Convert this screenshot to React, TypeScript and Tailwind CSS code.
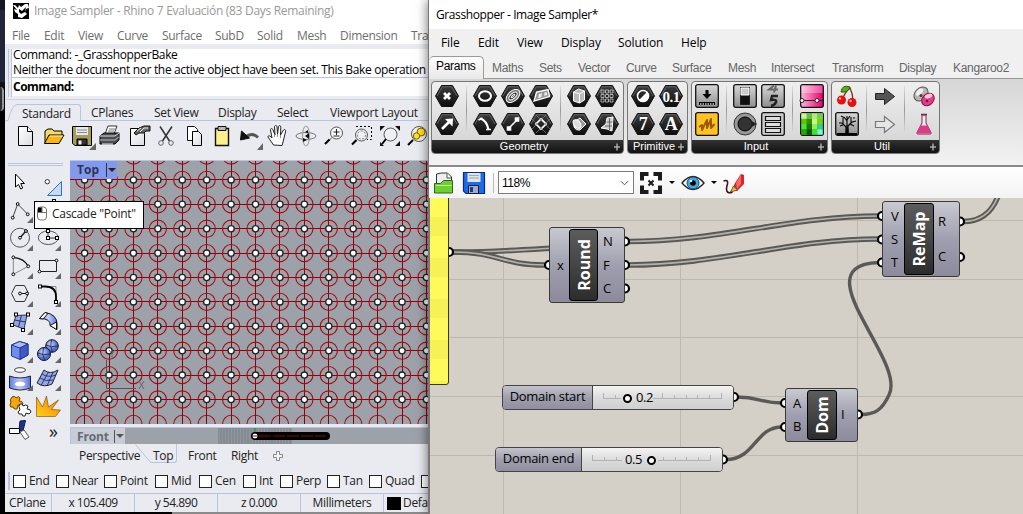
import React from "react";

type Item = { t: string; c: string };

const rhinoMenu: Item[] = [
  { t: "File", c: "w-[32px]" },
  { t: "Edit", c: "w-[34px]" },
  { t: "View", c: "w-[39px]" },
  { t: "Curve", c: "w-[45px]" },
  { t: "Surface", c: "w-[53px]" },
  { t: "SubD", c: "w-[42px]" },
  { t: "Solid", c: "w-[40px]" },
  { t: "Mesh", c: "w-[43px]" },
  { t: "Dimension", c: "w-[71px]" },
  { t: "Transform", c: "w-[60px]" },
];

const ghMenu: Item[] = [
  { t: "File", c: "w-[37px]" },
  { t: "Edit", c: "w-[39px]" },
  { t: "View", c: "w-[44px]" },
  { t: "Display", c: "w-[57px]" },
  { t: "Solution", c: "w-[63px]" },
  { t: "Help", c: "w-[40px]" },
];

const ghTabs: Item[] = [
  { t: "Maths", c: "w-[47px]" },
  { t: "Sets", c: "w-[39px]" },
  { t: "Vector", c: "w-[48px]" },
  { t: "Curve", c: "w-[46px]" },
  { t: "Surface", c: "w-[56px]" },
  { t: "Mesh", c: "w-[43px]" },
  { t: "Intersect", c: "w-[61px]" },
  { t: "Transform", c: "w-[67px]" },
  { t: "Display", c: "w-[54px]" },
  { t: "Kangaroo2", c: "w-[70px]" },
];

const snaps: Item[] = [
  { t: "End", c: "w-[43px]" },
  { t: "Near", c: "w-[48px]" },
  { t: "Point", c: "w-[51px]" },
  { t: "Mid", c: "w-[44px]" },
  { t: "Cen", c: "w-[44px]" },
  { t: "Int", c: "w-[37px]" },
  { t: "Perp", c: "w-[47px]" },
  { t: "Tan", c: "w-[42px]" },
  { t: "Quad", c: "w-[52px]" },
  { t: "Knot", c: "w-[52px]" },
];

function Cell({ children, corner }: { children: React.ReactNode; corner?: boolean }) {
  return (
    <svg viewBox="0 0 28 28" className="h-[28px] w-[28px] shrink-0 overflow-visible" fill="none" stroke="#222" strokeWidth="1">
      {children}
      {corner && <path d="M27 21v6h-6z" fill="#666" stroke="none" />}
    </svg>
  );
}

const Sq = ({ x, y }: { x: number; y: number }) => (
  <rect x={x - 1.5} y={y - 1.5} width="3" height="3" fill="#fff" stroke="#000" />
);
const Dot = ({ x, y }: { x: number; y: number }) => <circle cx={x} cy={y} r="1.4" fill="#fff" stroke="#000" />;

function StandardTools() {
  return (
    <div className="flex h-[28px] pl-[7px]">
      <Cell>
        <path d="M6.500 4.500h9l5 5v14h-14z" fill="url(#paper)" stroke="#000" />
        <path d="M15.500 4.500v5h5" fill="#fff" stroke="#000" />
      </Cell>
      <Cell>
        <path d="M5 21V9l3-2h4l2 2h8v5" fill="#f5d76a" stroke="#000" />
        <path d="M4.500 21.500 9 13h15l-5 8.500z" fill="#f7b718" stroke="#000" />
        <path d="M10 14h13" stroke="#fff3a8" />
      </Cell>
      <Cell>
        <path d="M4.500 4.500h19v19H7l-2.500-2z" fill="#a79b5e" stroke="#000" />
        <path d="M8 5h12v8H8z" fill="#e8e9ee" stroke="none" />
        <path d="M9 8h10M9 10.500h10" stroke="#888" />
        <path d="M9 17h10v6H9z" fill="#333" stroke="#000" />
        <path d="M10.500 18.500h3v4h-3z" fill="#eee" stroke="none" />
        <path d="M28 21v7h-7z" fill="#666" stroke="none" />
      </Cell>
      <Cell>
        <path d="m9 12 3-8h9l-3 8z" fill="#fff" stroke="#333" />
        <path d="M13 7h6M12 9h6" stroke="#777" />
        <path d="m4 14 4-3h15v7l-4 4H4z" fill="#4b4d52" stroke="#000" />
        <path d="M4 14h15l4-3" stroke="#ddd" />
        <path d="M4 18h15l4-3" stroke="#bbb" />
        <path d="M6 22h11" stroke="#fff" />
      </Cell>
      <Cell>
        <path d="M6.500 6.500h10l4 5v12h-14z" fill="url(#paper)" stroke="#000" />
        <path d="m10 11 5-5 5-2h6v5h-4l-2 2h-5l-3 2z" fill="#666" stroke="#111" />
        <path d="M13 9l4-3M16 10l4-4M20 6h4" stroke="#eee" />
      </Cell>
      <Cell>
        <path d="M8 4.500 17.500 19M20 4.500 10.500 19" stroke="#333" strokeWidth="1.500" />
        <circle cx="9" cy="21" r="2.300" stroke="#666" />
        <circle cx="19" cy="21" r="2.300" stroke="#666" />
      </Cell>
      <Cell>
        <path d="M7.500 4.500h7l3 3v11h-10z" fill="#fff" stroke="#111" />
        <path d="M12.500 9.500h6l3 3v11h-9z" fill="url(#paper)" stroke="#000" />
      </Cell>
      <Cell>
        <path d="M7.500 6.500h13v17h-13z" fill="#ffee8c" stroke="#111" strokeWidth="1.400" />
        <path d="M10 4.500h8v4h-8z" fill="#bbb" stroke="#111" />
      </Cell>
      <Cell>
        <path d="M9 15.500q7-6 13 0" stroke="#555" strokeWidth="2.800" />
        <path d="m4.500 18 1-9 8 7z" fill="#111" stroke="#111" />
        <path d="M27 21v7h-6z" fill="#666" stroke="none" />
      </Cell>
      <Cell>
        <path d="M9.500 23 4 15c0-2 2-1.500 4 1L6.500 8c0-2 2-2 2.500 0l2 5-.5-8c0-2 2.500-2 2.500 0l.5 7 1-7.500c.5-1.500 2.500-1 2.300.7L16.500 13 19.500 8c1-1.200 2.700 0 2 2l-2.500 10-1 3.500z" fill="#fff" stroke="#222" />
        <path d="M10.500 12v3M13.500 12v3M16.500 13v3" stroke="#777" strokeWidth=".8" />
      </Cell>
      <Cell>
        <ellipse cx="14" cy="14" rx="10" ry="3.500" stroke="#777" />
        <ellipse cx="14" cy="14" rx="3.500" ry="10" stroke="#999" />
        <path d="m17 11-4 3 4 3zM11 16l4 2-4 2zM16 8l-3 2 3 1.500z" fill="#111" stroke="none" />
      </Cell>
      <Cell>
        <circle cx="16.500" cy="11" r="6" fill="#f7f7f9" stroke="#555" />
        <path d="M13.500 10h6M16.500 7v6M13.500 14h6" stroke="#222" />
        <path d="m12 15.500-3 3" stroke="#555" />
        <path d="m9.500 17.500-4.500 4.500" stroke="#000" strokeWidth="2.200" />
      </Cell>
      <Cell>
        <path d="M8 4.500h15.500v13H19" stroke="#000" strokeDasharray="2 2" />
        <circle cx="13.500" cy="13" r="6" fill="#eef0f4" stroke="#555" />
        <circle cx="13.500" cy="13" r="4" stroke="#777" strokeDasharray="2 1.500" />
        <path d="m8.500 18-4.500 4.500" stroke="#000" strokeWidth="2.200" />
      </Cell>
      <Cell>
        <circle cx="14.500" cy="12.500" r="6.500" fill="#eef0f4" stroke="#555" />
        <path d="m10 17-4 5" stroke="#000" strokeWidth="2" />
        <path d="M4 4h5L4 9zM24 4h-5l5 5zM24 24h-5l5-5zM4 24v-4l4 4z" fill="#111" stroke="none" />
      </Cell>
      <Cell>
        <circle cx="15" cy="12" r="7.500" fill="#eef0f4" stroke="#555" />
        <circle cx="17" cy="10" r="4" fill="#ffe01f" stroke="#776600" />
        <circle cx="12.500" cy="14" r="3.200" fill="#ffe01f" stroke="#776600" />
        <path d="m9 18-5 5" stroke="#000" strokeWidth="2" />
      </Cell>
    </div>
  );
}

function SideTools() {
  return (
    <div className="ml-[1px] grid w-[56px] grid-cols-2 pt-[2px]">
      <Cell>
        <path d="M9.500 6v13l3-2.500 2.200 4.500 2-1-2-4.500h3.800z" fill="#fff" stroke="#000" />
      </Cell>
      <Cell>
        <circle cx="13.300" cy="13.700" r="2.200" fill="#fff" stroke="#333" />
        <path d="M13.500 27.500h14v-14z" fill="#c9d8f4" stroke="#2c76b8" />
      </Cell>
      <Cell corner>
        <path d="M6.700 21.700 11.700 8l10 10.300" stroke="#444" />
        <Dot x={6.7} y={21.7} />
        <Dot x={11.7} y={8} />
        <Dot x={21.7} y={18.3} />
      </Cell>
      <Cell corner>
        <path d="M6 20C8 4 18 22 20 6" stroke="#444" />
        <Sq x={20} y={5} />
      </Cell>
      <Cell corner>
        <circle cx="14" cy="13.700" r="9.500" stroke="#555" />
        <path d="m14 13.700 6-6.700" stroke="#222" strokeWidth="1.500" />
        <Dot x={14} y={13.7} />
        <Dot x={20} y={7} />
      </Cell>
      <Cell corner>
        <ellipse cx="14.300" cy="13.700" rx="10" ry="6.800" stroke="#555" />
        <path d="M14 7v7h9" stroke="#333" />
        <Sq x={14} y={7} />
        <Sq x={14} y={14} />
        <Sq x={23} y={14} />
      </Cell>
      <Cell corner>
        <path d="M7.300 22.300V5.300M7.300 22.300l15-8" stroke="#888" />
        <path d="M7.300 5.300q11 1 15 9" stroke="#111" strokeWidth="1.300" />
        <Dot x={7.3} y={5.3} />
        <Dot x={22.3} y={14.3} />
        <Dot x={7.3} y={22.3} />
      </Cell>
      <Cell corner>
        <path d="M5.500 8.500h17v11h-17z" stroke="#222" />
        <Dot x={22.5} y={8.5} />
        <Dot x={5.5} y={19.5} />
      </Cell>
      <Cell corner>
        <path d="m5.500 13.500 4-8h9l4 8-4 8h-9z" stroke="#333" />
        <path d="M14 13.500h7" stroke="#111" />
        <Dot x={14} y={13.5} />
        <Dot x={21} y={13.5} />
      </Cell>
      <Cell corner>
        <path d="M6 6.500h16v16" stroke="#888" />
        <path d="M6 6.500h5q11 0 11 10v5" stroke="#000" strokeWidth="1.800" />
        <Sq x={6} y={6.5} />
        <Sq x={22} y={22} />
      </Cell>
      <Cell corner>
        <path d="M10 7.500 21 7l-3 14L7 17z" fill="#8ea6f0" stroke="#334" />
        <path d="M15.500 7.300 12.500 19M8.500 12l11 2" stroke="#334" />
        <Sq x={10} y={6.5} />
        <Sq x={22} y={6.5} />
        <Sq x={6} y={17} />
        <Sq x={17} y={22} />
      </Cell>
      <Cell corner>
        <path d="m5.500 10.500 5.500-6q12 2 12 11v6l-7-4q1-7-10.500-7z" fill="url(#blue)" stroke="#111" />
        <path d="m5.500 10.500 5.500-6 3 1-5 5.500zM16 17.500l6.500-3.500v7.500z" fill="#fff" stroke="#111" />
      </Cell>
      <Cell corner>
        <path d="m5.500 9 8-3.500L22 8v11l-8 4.500L5.500 20z" fill="#6f8cf0" stroke="#223a8c" />
        <path d="m5.500 9 8-3.500L22 8l-8 4z" fill="#a9bcff" stroke="#223a8c" />
        <path d="m22 8-8 4v11.500l8-4.500z" fill="#4259c4" stroke="#223a8c" />
      </Cell>
      <Cell corner>
        <circle cx="18" cy="10" r="6.300" fill="url(#ball)" stroke="#112" />
        <circle cx="10" cy="18" r="6.500" fill="url(#ball)" stroke="#112" />
        <path d="M12 9q5 3 12 1M17.500 4q-2 6 1 12M4 17q5 3 12 1M9.500 12q-2 6 1 12" stroke="#112" strokeWidth=".7" />
      </Cell>
      <Cell corner>
        <ellipse cx="14" cy="6" rx="5.500" ry="2.300" fill="#fff" stroke="#444" />
        <path d="M3.500 12q10.500 4 21 0v12q-10.500 4-21 0z" fill="url(#blue)" stroke="#223" />
        <ellipse cx="14" cy="20" rx="5.500" ry="3" fill="#fff" stroke="#aac" />
      </Cell>
      <Cell corner>
        <path d="M10 6q6 5 14 0l-6 14q-8 4-15-1z" fill="#90a6ee" stroke="#223" />
        <path d="M14.500 8 7 21.500M19 8l-6 14M8 10q6 4 14 1M6 14q6 4 13 2" stroke="#223" strokeWidth=".8" />
      </Cell>
      <Cell>
        <path d="M6 5q3-2 4 1 3-3 4 0l-1 3q4 0 4 3-2 3-5 1l-1 4q-3 1-4-2-3 1-3-2l1-3q-2-2 1-5z" fill="#f3a512" stroke="#6b4500" />
        <path d="M14 12q3-1 3 2 3-2 5 0l-1 3q4 0 4 3l-2 2-3-1-1 3q-3 1-3-2-4 1-4-2l2-2q-2-4 0-6z" fill="#fff" stroke="#222" />
      </Cell>
      <Cell>
        <path d="M2.500 24.500V5l6 10 4-11 2 11 10-7-7 9.500 9 .5-5 6.500z" fill="url(#fire)" stroke="#7a4300" strokeWidth=".6" />
      </Cell>
      <Cell>
        <path d="m14 1 5.500-.5L17 11l-4-1z" fill="#1c3387" stroke="#0b1850" />
        <path d="M3.500 8.500h10v5h-10z" fill="#fff" stroke="#000" />
        <path d="m14 12 4-2 5 7-4 2.500z" fill="#fff" stroke="#555" />
      </Cell>
      <div className="flex h-[22px] items-center pl-[15px] text-[18px] leading-none text-[#222]">»</div>
    </div>
  );
}

const cols = Array.from({ length: 15 }, (_, i) => 14.6 + i * 24.42);
const rows = Array.from({ length: 12 }, (_, i) => -5.5 + i * 24.4);

function TopViewport() {
  return (
    <svg className="block h-[263px] w-[358px]" viewBox="0 0 358 263">
      <rect width="358" height="263" fill="#9da2aa" />
      {cols.map((x, i) => (
        <line key={i} x1={Math.floor(x) + 0.5} x2={Math.floor(x) + 0.5} y1="0" y2="263" stroke="#900006" />
      ))}
      {rows.slice(0, 11).map((y, i) => (
        <line key={i} y1={Math.floor(y) + 0.5} y2={Math.floor(y) + 0.5} x1="0" x2="358" stroke="#900006" />
      ))}
      {rows.map((y, j) =>
        cols.map((x, i) => (
          <g key={i + "-" + j}>
            <circle cx={x} cy={y} r="8.600" fill="none" stroke="#a00d12" strokeWidth="1.100" />
            {j < 11 && <circle cx={x} cy={y} r="3.100" fill="#fff" stroke="#222" strokeWidth="1.300" />}
          </g>
        ))
      )}
      <path d="M36.500 199v28.500H66" fill="none" stroke="#555" />
      <path d="m69 220 5 8m0-8-5 8M39 189l3 4 3-4m-3 4v5" fill="none" stroke="#666" />
    </svg>
  );
}

function Rhino() {
  return (
    <div className="flex w-[423px] shrink-0 flex-col overflow-hidden whitespace-nowrap bg-[#eaebf0] text-[12px] tracking-[-0.3px] text-[#222]">
      <div className="flex h-[22px] shrink-0 items-center bg-white pl-[8px] text-[#999]">
        <svg viewBox="0 0 16 16" className="mr-[5px] h-[16px] w-[16px]">
          <rect width="16" height="16" fill="#000" />
          <path d="M0 2h2l3 3 1-3 2 2 4-3h3l1 4-3 1-1 3 2 2-5 4-4-1V11L2 9 1 6l3 1z" fill="#fff" />
          <path d="m6 6 3 2 4-4-1 5-4 2-2-2z" fill="#000" />
        </svg>
        <span>Image Sampler - Rhino 7 Evaluación (83 Days Remaining)</span>
      </div>
      <div className="flex h-[22px] shrink-0 items-center bg-white pl-[7px] pt-[6px] text-[#6d6d6d]">
        {rhinoMenu.map((m) => (
          <span key={m.t} className={`${m.c} shrink-0`}>{m.t}</span>
        ))}
      </div>
      <div className="flex h-[56px] shrink-0 border-b border-[#cfd2e0] pt-[5px]">
        <div className="ml-[3px] h-[48px] w-[4px] border-x border-[#b9c4de]" />
        <div className="flex h-[47px] flex-1 flex-col bg-white text-black">
          <div className="h-[14px] pl-[1px] leading-[12px] tracking-[-0.36px]">Command: -_GrasshopperBake</div>
          <div className="h-[15px] border-b border-[#b9c4de] pl-[1px] leading-[14px] tracking-[-0.345px]">Neither the document nor the active object have been set. This Bake operation</div>
          <div className="pl-[1px] leading-[17px] font-bold tracking-[-0.5px]">Command:</div>
        </div>
      </div>
      <div className="flex h-[21px] shrink-0 pt-[4px]">
        <svg viewBox="0 0 12 17" className="h-[17px] w-[12px]">
          <path d="M0 16.500h3Q7 1 12 .5" fill="none" stroke="#b9c4de" />
        </svg>
        <div className="w-[64px] rounded-tr-[3px] border-t border-r border-[#b9c4de] pl-[5px] leading-[17px]">Standard</div>
        <div className="flex flex-1 border-b border-[#b9c4de] pl-[10px] leading-[18px]">
          <span className="w-[63px] shrink-0">CPlanes</span>
          <span className="w-[64px] shrink-0">Set View</span>
          <span className="w-[59px] shrink-0">Display</span>
          <span className="w-[53px] shrink-0">Select</span>
          <span className="shrink-0 tracking-[-0.2px]">Viewport Layout</span>
        </div>
      </div>
      <div className="h-[39px] shrink-0 pt-[1px]">
        <StandardTools />
      </div>
      <div className="flex h-[284px] shrink-0">
        <div className="w-[65px] shrink-0 pt-[3px]">
          <div className="ml-[3px] h-[3px] w-[55px] border-y border-[#b9c4de]" />
          <SideTools />
        </div>
        <div className="relative w-[358px]">
          <div className="h-px bg-[#b9c4de]" />
          <TopViewport />
          <div className="absolute left-0 top-[1px] flex h-[18px] w-[47px] items-center bg-[#8299ee] text-[12px] font-bold tracking-normal text-[#2b3550]">
            <span className="w-[36px] pl-[7px]">Top</span>
            <span className="h-[14px] w-px bg-[#333]" />
            <span className="ml-[1px] border-x-[4px] border-t-[4px] border-x-transparent border-t-[#222]" />
          </div>
          <div className="absolute -left-[36px] top-[41px] flex h-[28px] w-[110px] items-start border border-black bg-white pl-[2px] pt-[4px]">
            <svg viewBox="0 0 10 14" className="h-[15px] w-[10px]">
              <rect x=".5" y=".5" width="9" height="13" rx="3" fill="#fff" stroke="#777" />
              <path d="M1 1h4v5H1z" />
              <path d="M1 6h8M5 1v5" stroke="#777" />
            </svg>
            <span className="ml-[5px] leading-[15px]">Cascade "Point"</span>
          </div>
          <div className="mt-[3px] flex h-[17px] border-t border-l border-[#b9c4de] bg-[#9da2aa]">
            <div className="flex w-[54px] items-center bg-[#c8ccd6] font-bold tracking-[-0.15px] text-[#666b75]">
              <span className="w-[43px] pl-[6px] pt-[2px]">Front</span>
              <span className="h-[13px] w-px bg-[#555]" />
              <span className="ml-[1px] border-x-[4px] border-t-[4px] border-x-transparent border-t-[#555]" />
            </div>
            <svg viewBox="0 0 303 16" className="h-[16px] w-[303px]">
              <rect x="93" width="74" height="16" fill="#868b93" />
              {Array.from({ length: 24 }, (_, i) => (
                <line key={i} x1={94.5 + i * 3} x2={94.5 + i * 3} y1="0" y2="16" stroke="#959aa2" strokeWidth=".7" />
              ))}
              <path d="M130 0v6" stroke="#2e9a3a" strokeWidth="1.500" />
              <path d="M130 8h71" stroke="#000" strokeWidth="8" strokeLinecap="round" />
              <path d="M134 8h67" stroke="#7a0a0e" strokeDasharray="12 2" />
              <circle cx="130" cy="8" r="3" fill="#fff" stroke="#000" />
              <path d="M128 8h4" stroke="#900" />
            </svg>
          </div>
        </div>
      </div>
      <div className="flex h-[24px] shrink-0 pl-[74px] leading-[23px]">
        <span className="w-[61px] shrink-0">Perspective</span>
        <svg viewBox="0 0 17 20" className="-ml-[5px] h-[20px] w-[17px]">
          <path d="M.5.500 14 16.500q1 2 3 2" fill="none" stroke="#b9c4de" />
        </svg>
        <span className="flex h-[19px] w-[25px] rounded-br-[3px] border-r border-b border-[#b9c4de] pl-[1px]">Top</span>
        <span className="ml-[11px] w-[43px] shrink-0">Front</span>
        <span className="w-[42px] shrink-0">Right</span>
        <svg viewBox="0 0 10 10" className="mt-[7px] h-[10px] w-[10px]">
          <path d="M3.500.5h3v3h3v3h-3v3h-3v-3h-3v-3h3z" fill="#f6f6f8" stroke="#888" />
        </svg>
      </div>
      <div className="flex h-[25px] shrink-0 items-center pt-[1px]">
        <div className="ml-[3px] h-[18px] w-[3px] border-x border-[#b9c4de]" />
        <div className="flex pl-[3px]">
          {snaps.map((s) => (
            <span key={s.t} className={`${s.c} flex shrink-0 items-center`}>
              <span className="mr-[3px] h-[13px] w-[13px] shrink-0 border border-[#222] bg-white" />
              {s.t}
            </span>
          ))}
        </div>
      </div>
      <div className="flex h-[19px] shrink-0 border-t border-[#b9c4de] leading-[18px]">
        <span className="w-[47px] shrink-0 border-r border-[#b9c4de] pl-[4px]">CPlane</span>
        <span className="w-[83px] shrink-0 border-r border-[#b9c4de] text-center tracking-[-0.5px]">x 105.409</span>
        <span className="w-[83px] shrink-0 border-r border-[#b9c4de] text-center tracking-[-0.5px]">y 54.890</span>
        <span className="w-[83px] shrink-0 border-r border-[#b9c4de] text-center tracking-[-0.5px]">z 0.000</span>
        <span className="w-[83px] shrink-0 border-r border-[#b9c4de] text-center">Millimeters</span>
        <span className="ml-[3px] mt-[3px] h-[13px] w-[14px] shrink-0 bg-black" />
        <span className="ml-[2px]">Default</span>
      </div>
      <div className="flex flex-1 bg-[#8a8a8a]">
        <div className="w-[167px] bg-black" />
      </div>
    </div>
  );
}

function Hex({ children }: { children: React.ReactNode }) {
  return (
    <svg viewBox="0 0 28 28" className="h-[28px] w-[28px]" fill="none" stroke="#fff" strokeWidth="1.600">
      <path d="M2.500 14 8.500 3.500h11L25.500 14l-6 10.500h-11z" fill="url(#hex)" stroke="#111" strokeWidth="1" strokeLinejoin="round" />
      <path d="M4 14 9.300 4.800h9.400L24 14" stroke="#777" strokeWidth=".7" />
      {children}
    </svg>
  );
}

function Box({ children, fill }: { children: React.ReactNode; fill: string }) {
  return (
    <svg viewBox="0 0 28 28" className="h-[28px] w-[28px]" fill="none" stroke="#222" strokeWidth="1">
      <rect x="2.700" y="2.700" width="22.600" height="22.600" rx="2" fill={fill} stroke="#111" strokeWidth="1.300" />
      {children}
    </svg>
  );
}

function Glyph({ children, size }: { children: string; size: string }) {
  return (
    <text x="14" y="19.500" textAnchor="middle" fontSize={size} fontFamily="Liberation Serif, serif" fontWeight="bold" fill="#fff" stroke="none" letterSpacing="-0.5">
      {children}
    </text>
  );
}

function Group({ title, width, children }: { title: string; width: string; children: React.ReactNode }) {
  return (
    <div className={`${width} mr-[3px] flex h-[73px] shrink-0 flex-col overflow-hidden rounded-[4px] border border-[#777] bg-linear-to-b from-[#efefef] to-[#d2d2d2]`}>
      <div className="flex h-[58px] gap-0">{children}</div>
      <div className="flex h-[13px] items-center bg-linear-to-b from-[#333] to-[#111] font-['Liberation_Sans',Arial,sans-serif] text-[11px] tracking-normal text-white">
        <span className="flex-1 pl-[3px] text-center">{title}</span>
        <svg viewBox="0 0 8 8" className="mr-[2px] h-[8px] w-[8px]">
          <path d="M4 .5v7M1 4h6" stroke="#aaa" strokeWidth="1.500" />
        </svg>
      </div>
    </div>
  );
}

const Pair = ({ children, m }: { children: React.ReactNode; m: string }) => (
  <div className={`${m} flex w-[28px] shrink-0 flex-col`}>{children}</div>
);
const Rule = ({ m }: { m: string }) => <div className={`${m} mt-[4px] h-[48px] w-px shrink-0 bg-linear-to-b from-[#ddd] via-[#999] to-[#ddd]`} />;

const mosaic = ["#b5f06a", "#2f9a00", "#8fe23a", "#35b800", "#63c400", "#2a9200", "#c8f58a", "#6fd512", "#49e33a", "#1d7a00", "#8ef05a", "#33cf90", "#22aa00", "#0c5200", "#3be03a", "#7cf5d0"];

function Ribbon() {
  return (
    <div className="flex h-[88px] shrink-0 border-b-2 border-[#8a8a8a] bg-linear-to-b from-[#d6d6d6] to-[#f2f2f2] pl-[2px] pt-[2px]">
      <Group title="Geometry" width="w-[193px]">
        <Pair m="ml-[1px]">
          <Hex><path d="m11 11 6 6m0-6-6 6" strokeWidth="2.800" /></Hex>
          <Hex><path d="m9 19 7-7" strokeWidth="2.600" /><path d="m12 9 8-.5-.5 8z" fill="#fff" stroke="none" /></Hex>
        </Pair>
        <Rule m="ml-[5px]" />
        <Pair m="ml-[4px]">
          <Hex><ellipse cx="14" cy="14" rx="6" ry="4.800" strokeWidth="2" /></Hex>
          <Hex><path d="M9 8.500q7 2 8.500 11.500" strokeWidth="2.200" /><path d="m7.500 10 4-2M15 19.500h5" /></Hex>
        </Pair>
        <Pair m="">
          <Hex><g transform="rotate(-42 14 14)" strokeWidth="1"><ellipse cx="14" cy="14" rx="8" ry="5" fill="#777" /><ellipse cx="14" cy="14" rx="5" ry="2.500" fill="#222" /><ellipse cx="14" cy="14" rx="2.500" ry=".8" /></g></Hex>
          <Hex><path d="m10 18 8-8" /><path d="M8.500 17h3v3h-3zM16.500 8h3v3h-3z" fill="#fff" /></Hex>
        </Pair>
        <Pair m="">
          <Hex><path d="m7 19 2.500-9L21 7.500l1.500 7z" fill="#999" strokeWidth="1.300" /><path d="m12 12 3-.7-.7 4-3.200.7zM17.500 10.500l2-.5.7 3-3 .8z" fill="#eee" stroke="none" /></Hex>
          <Hex><path d="m14 9 5 5-5 5-5-5z" strokeWidth="1.800" /><path d="m9 5 14 14M5 9l14 14M19 5 5 19M23 9 9 23" stroke="#888" strokeWidth=".7" /></Hex>
        </Pair>
        <Rule m="ml-[5px]" />
        <Pair m="ml-[4px]">
          <Hex><path d="m8.500 10 5-3 6 2v9l-5 3-6-2z" fill="#bbb" stroke="#fff" strokeWidth="1" /><path d="m8.500 10 6 2 5-3M14.500 12v9" strokeWidth="1" /></Hex>
          <Hex><path d="m9 12 6-4 6 6-6 6q-4 1-6-3z" fill="#999" strokeWidth="1" /><ellipse cx="12" cy="14" rx="3.200" ry="5" transform="rotate(-40 12 14)" fill="#ddd" strokeWidth="1" /></Hex>
        </Pair>
        <Pair m="">
          <Hex><path d="M8 8h3v3H8zM12.500 8h3v3h-3zM17 8h3v3h-3zM8 12.500h3v3H8zM12.500 12.500h3v3h-3zM17 12.500h3v3h-3zM8 17h3v3H8zM12.500 17h3v3h-3zM17 17h3v3h-3z" strokeWidth=".8" stroke="#ccc" /></Hex>
          <Hex><path d="m14 8 6-1-1 14-5-2-6-1 5-4z" fill="#ccc" strokeWidth="1" /><path d="M16.500 8v12M13.500 12h6M12 16h7" stroke="#555" strokeWidth=".8" /></Hex>
        </Pair>
      </Group>
      <Group title="Primitive" width="w-[61px]">
        <Pair m="ml-[1px]">
          <Hex><circle cx="14" cy="14" r="5.500" /><path d="M10 18a5.500 5.500 0 0 0 8-8z" fill="#fff" stroke="none" /></Hex>
          <Hex><Glyph size="18">7</Glyph></Hex>
        </Pair>
        <Pair m="">
          <Hex><Glyph size="15">0.1</Glyph></Hex>
          <Hex><Glyph size="18">A</Glyph></Hex>
        </Pair>
      </Group>
      <Group title="Input" width="w-[137px]">
        <Pair m="ml-[1px]">
          <Box fill="url(#grey)"><path d="M14 8v5" stroke="#000" strokeWidth="3" /><path d="M9.500 12h9L14 17z" fill="#000" stroke="none" /><path d="M6 20.500h16M6.500 20v3M9 20v3M11.500 20v3M14 20v3M16.500 20v3M19 20v3M21.500 20v3" stroke="#000" /></Box>
          <Box fill="#ffc325"><path d="m6 17 3-2v5l5-10v8l4-9v9l3.500-4" stroke="#9a5a00" strokeWidth="2" strokeLinejoin="round" /></Box>
        </Pair>
        <Rule m="ml-[5px]" />
        <Pair m="ml-[4px]">
          <Box fill="url(#grey)"><path d="M9.500 5.500h9v17h-9z" fill="#111" /><path d="M10 6h8v7h-8z" fill="#ccc" stroke="#fff" /></Box>
          <svg viewBox="0 0 28 28" className="h-[28px] w-[28px]" fill="none"><circle cx="14" cy="14" r="11" fill="#999" stroke="#333" /><circle cx="14" cy="14" r="7" fill="#333" stroke="#000" /><path d="M20 10.500 26 14l-6 3.500z" fill="#222" /></svg>
        </Pair>
        <Pair m="">
          <Box fill="url(#grey)"><path d="M15 3.500 10 7.500h9M17 3.500l-2 7" stroke="#666" strokeWidth="2" /><path d="M19 14h-6l-1 4q6-1 5 2-1 3-5 4" stroke="#222" strokeWidth="2.400" /></Box>
          <Box fill="#ccc"><path d="M6.500 6.500h15v4h-15zM6.500 12.500h15v4h-15zM6.500 18.500h15v4h-15z" fill="#ddd" stroke="#111" strokeWidth="1.200" /></Box>
        </Pair>
        <Rule m="ml-[5px]" />
        <Pair m="ml-[5px]">
          <Box fill="url(#pink)"><path d="M3.400 3.400h21.200V11H3.400z" fill="#fff" fillOpacity=".3" stroke="none" /><path d="M3 18.500h22" stroke="#222" /><circle cx="4" cy="18.500" r="2" fill="#fff" /><circle cx="19" cy="18.500" r="2" fill="#fff" /></Box>
          <Box fill="#3a0">{mosaic.map((c, i) => <rect key={i} x={3.4 + (i % 4) * 5.3} y={3.4 + Math.floor(i / 4) * 5.3} width="5.400" height="5.400" fill={c} stroke="none" />)}<path d="M3 3h22v6H3z" fill="#fff" fillOpacity=".3" stroke="none" /></Box>
        </Pair>
      </Group>
      <Group title="Util" width="w-[109px]">
        <Pair m="ml-[1px]">
          <svg viewBox="0 0 28 28" className="h-[28px] w-[28px]" fill="none"><path d="M9 18Q12 10 17 6q3 6 3 13" stroke="#7a2d18" strokeWidth="1.300" /><path d="M17 5q-8-3-9 5 7 1 9-5z" fill="#5cab1c" stroke="#2b6200" /><circle cx="8.500" cy="18" r="4.500" fill="#e01212" /><circle cx="19" cy="20.500" r="4.500" fill="#e01212" /><circle cx="7" cy="16.500" r="1.200" fill="#ffb0b0" /><circle cx="17.500" cy="19" r="1.200" fill="#ffb0b0" /></svg>
          <Box fill="url(#grey)"><path d="M14 24v-8M14 18l-5-5M14 17l5-5M9 13l-3 0M10 14V8M18 13V7M19 12l4-1M14 16V6M14 11l-3-4M14 10l3-4M7 16l3-1M21 16l-4-2M12 8 8 6M20 8l2 0" stroke="#000" strokeWidth="1.100" /><path d="M12.500 24l.5-8h2l.8 8z" fill="#000" /><path d="M4 24h20" stroke="#000" strokeWidth="2" /></Box>
        </Pair>
        <Rule m="ml-[5px]" />
        <Pair m="ml-[4px]">
          <svg viewBox="0 0 28 28" className="h-[28px] w-[28px]"><path d="M4.500 11.500h9v-5l10 8-10 8v-5h-9z" fill="#555" stroke="#222" /></svg>
          <svg viewBox="0 0 28 28" className="h-[28px] w-[28px]"><path d="M4.500 11.500h9v-5l10 8-10 8v-5h-9z" fill="#e6e6e6" stroke="#777" strokeWidth="1.200" /></svg>
        </Pair>
        <Rule m="ml-[5px]" />
        <Pair m="ml-[5px]">
          <svg viewBox="0 0 28 28" className="h-[28px] w-[28px]"><ellipse cx="11" cy="12" rx="8" ry="6" transform="rotate(-45 11 12)" fill="#b5b5b5" stroke="#555" /><ellipse cx="9.500" cy="10" rx="4.500" ry="2.500" transform="rotate(-45 9.500 10)" fill="#eee" /><circle cx="11" cy="13.500" r="1.600" fill="#444" /><ellipse cx="18" cy="17.500" rx="7" ry="5.500" transform="rotate(-45 18 17.500)" fill="#df3f83" stroke="#8a1148" /><ellipse cx="18.500" cy="14" rx="4" ry="2.200" transform="rotate(-20 18.500 14)" fill="#ffc7dd" /><circle cx="17" cy="19" r="1.300" fill="#8a1148" /></svg>
          <svg viewBox="0 0 28 28" className="h-[28px] w-[28px]"><path d="M12 5h4v8l5 9.500q.5 1.500-1 1.500H8q-1.500 0-1-1.500L12 13z" fill="#f7e9f0" stroke="#7c2750" /><path d="M10.500 15.500h7l3.500 7q.3 1-1 1H8q-1.300 0-1-1z" fill="#dc3c84" /><path d="M11 4.500h6" stroke="#7c2750" strokeWidth="1.500" /></svg>
        </Pair>
      </Group>
    </div>
  );
}

const Down = () => <span className="w-0 border-x-[3px] border-t-[3px] border-x-transparent border-t-black" />;

function CanvasBar() {
  return (
    <div className="flex h-[31px] shrink-0 items-center bg-linear-to-b from-white to-[#f3f3f3] pl-[4px]">
      <svg viewBox="0 0 22 24" className="h-[24px] w-[22px]">
        <path d="M3.500 3V13h15V6l-4-4h-6z" fill="#eee" stroke="#333" />
        <path d="M14 2v5h4" fill="#fff" stroke="#555" />
        <path d="M1.500 12.500h6l3-3h9v12.500h-18z" fill="#6fce35" stroke="#2b6b0d" />
        <path d="M3 14.500h16" stroke="#b6f08c" />
      </svg>
      <svg viewBox="0 0 24 24" className="ml-[7px] h-[24px] w-[24px]">
        <path d="M1.500 1.500h21v21H4l-2.500-2.500z" fill="#1d6be8" stroke="#072a80" strokeWidth="1.200" />
        <path d="M5.500 2h13v9h-13z" fill="#dfe3ea" />
        <path d="M7 4.500h10M7 7h10" stroke="#9aa" />
        <path d="M6.500 14.500h10v8h-10z" fill="#aab" stroke="#123" />
        <path d="M8 16h3v5H8z" fill="#123a99" />
      </svg>
      <span className="ml-[7px] h-[20px] w-px bg-[#bbb]" />
      <div className="ml-[4px] flex h-[23px] w-[136px] items-center border border-[#7a7a7a] bg-white pl-[3px] font-['Liberation_Sans',Arial,sans-serif] text-[12px] text-black">
        <span className="flex-1 tracking-[-0.5px]">118%</span>
        <svg viewBox="0 0 10 6" className="mr-[4px] h-[6px] w-[9px]"><path d="m1 1 4 4 4-4" fill="none" stroke="#444" /></svg>
      </div>
      <svg viewBox="0 0 24 24" className="ml-[5px] h-[24px] w-[24px]" fill="none" stroke="#1b1b1b" strokeWidth="4">
        <path d="M9.500 3H3v6.500M14.500 3H21v6.500M9.500 21H3v-6.500M14.500 21H21v-6.500" />
        <path d="m9.500 9.500 5 5m0-5-5 5" strokeWidth="2" />
      </svg>
      <span className="ml-[6px] flex"><Down /></span>
      <svg viewBox="0 0 24 16" className="ml-[6px] h-[16px] w-[24px]">
        <path d="M1 8q11-13 22 0-11 13-22 0z" fill="#fff" stroke="#222" strokeWidth="1.300" />
        <circle cx="12" cy="8" r="6" fill="#4ba3dc" stroke="#13507c" />
        <circle cx="12" cy="8" r="2.800" fill="#000" />
        <circle cx="10" cy="6" r="1.300" fill="#fff" />
      </svg>
      <span className="ml-[6px] flex"><Down /></span>
      <svg viewBox="0 0 24 24" className="ml-[5px] h-[24px] w-[24px]">
        <path d="M1.500 10q5-2 4 3-2 6 0 8 2 1.500 5 0" fill="none" stroke="#4a1010" strokeWidth="1.600" />
        <path d="m10 19 3-7 6-9 3 1v9l-7 7z" fill="#d8262c" />
        <path d="M14 12 19 4v9l-4 5z" fill="#f46a66" />
        <path d="m8.500 21 3-6 4 4z" fill="#e9bd52" stroke="#5b3a10" strokeWidth=".8" />
      </svg>
    </div>
  );
}

const nodeCls = "absolute rounded-[3px] border border-[#3a3a3a] bg-linear-to-b from-[#c9c9d1] via-[#a09faf] to-[#8c8a9b] text-[13px] leading-none text-black";
const coreCls = "absolute flex items-center justify-center rounded-[3px] border border-black bg-linear-to-b from-[#5c5c5c] via-[#454545] to-[#2c2c2c]";
const nameCls = "-rotate-90 text-[16px] font-bold text-white whitespace-nowrap";

function Slider({ name, box, nameW, children }: { name: string; box: string; nameW: string; children: React.ReactNode }) {
  return (
    <div className={`${box} absolute flex h-[25px] overflow-hidden rounded-[4px] border border-[#444] text-[13px] text-black`}>
      <div className={`${nameW} flex shrink-0 items-center justify-center border-r border-[#444] bg-linear-to-b from-[#c4c4cc] via-[#a09faf] to-[#908e9f] pb-[2px] tracking-[-0.3px]`}>{name}</div>
      <div className="flex flex-1 items-center bg-linear-to-b from-[#f4f4f4] via-[#dcdcdc] to-[#cfcfcf]">{children}</div>
    </div>
  );
}

function Ticks({ from, to }: { from: number; to: number }) {
  const n = Array.from({ length: 11 }, (_, i) => i);
  return (
    <svg viewBox="0 0 120 10" className="absolute left-0 top-0 h-[10px] w-[120px]" stroke="#b2b2b2" fill="none">
      {n.map((i) => {
        const x = Math.round(i * 11.8) + 0.5;
        return x < from || x > to ? <line key={i} x1={x} x2={x} y1={i % 5 ? 2 : 0} y2="5" /> : null;
      })}
      <path d={`M0 5.500H${from}M${to} 5.500H119`} />
    </svg>
  );
}

const rightPorts = [[625, 241.5], [625, 265], [625, 288.5], [960, 221.5], [960, 257], [734, 397], [723, 459.5], [858, 414.5], [449, 252]];
const leftPorts = [[549, 265], [882, 216], [882, 239.5], [882, 262.5], [785, 403], [785, 427]];

const doubles = [
  "M452 252C500 253 540 247 600 247",
  "M452 252C500 252 500 265 545 265",
  "M628 241.500C720 241.500 790 216 879 216",
  "M628 265C720 265 790 239 879 239",
  "M963 221.500C985 221.500 995 208 1000 190",
];

function Canvas() {
  return (
    <div className="relative flex-1 overflow-hidden bg-[#d4d0c8]">
      <svg viewBox="429 198 594 316" className="absolute left-0 top-0 h-[316px] w-[594px]" fill="none">
        <path d="M503.500 198v316M680.500 198v316M857.500 198v316M429 220.500h594M429 279.500h594M429 337.500h594M429 396.500h594M429 455.500h594" stroke="#bcb9b1" />
        {doubles.map((d, i) => (
          <g key={i}>
            <path d={d} stroke="#5a5955" strokeWidth="5.600" />
            <path d={d} stroke="#b5b2ab" strokeWidth="1.700" />
          </g>
        ))}
        <path d="M879 262.500C800 265 907 360 889 395 882 410 875 414.500 861 414.500M737 397C760 397 760 403 782 403M726 459.500C755 459.500 755 427 782 427" stroke="#5a5955" strokeWidth="3.400" />
        {[...rightPorts, ...leftPorts].map(([x, y]) => (
          <circle key={x + "," + y} cx={x} cy={y} r="4" fill="#fff" stroke="#000" strokeWidth="2.200" />
        ))}
      </svg>
      <div className="absolute -left-[4px] -top-[4px] h-[191px] w-[24px] rounded-br-[3px] border border-[#3c3a10] bg-[repeating-linear-gradient(to_bottom,#fffa5c_0px,#fffa5c_22px,#f6f156_22px,#f6f156_41px)]" />
      <div className="absolute left-0 top-0 h-[316px] w-px bg-[#777]" />

      <div className={`${nodeCls} left-[120px] top-[29px] h-[76px] w-[76px]`}>
        <span className="absolute left-[7px] top-[31px]">x</span>
        <div className={`${coreCls} left-[19px] top-[1px] h-[72px] w-[29px]`}><span className={nameCls}>Round</span></div>
        <span className="absolute left-[53px] top-[7px]">N</span>
        <span className="absolute left-[53px] top-[31px]">F</span>
        <span className="absolute left-[53px] top-[54px]">C</span>
      </div>

      <div className={`${nodeCls} left-[453px] top-[3px] h-[76px] w-[78px]`}>
        <span className="absolute left-[8px] top-[8px]">V</span>
        <span className="absolute left-[8px] top-[31px]">S</span>
        <span className="absolute left-[8px] top-[54px]">T</span>
        <div className={`${coreCls} left-[21px] top-[1px] h-[72px] w-[30px]`}><span className={nameCls}>ReMap</span></div>
        <span className="absolute left-[55px] top-[13px]">R</span>
        <span className="absolute left-[55px] top-[48px]">C</span>
      </div>

      <div className={`${nodeCls} left-[356px] top-[190px] h-[54px] w-[73px]`}>
        <span className="absolute left-[7px] top-[8px]">A</span>
        <span className="absolute left-[7px] top-[31px]">B</span>
        <div className={`${coreCls} left-[21px] top-[1px] h-[50px] w-[30px]`}><span className={nameCls}>Dom</span></div>
        <span className="absolute left-[55px] top-[19px]">I</span>
      </div>

      <Slider name="Domain start" box="left-[73px] top-[187px] w-[232px]" nameW="w-[90px]">
        <div className="relative ml-[10px] h-[10px] w-[120px]">
          <Ticks from={18} to={50} />
          <span className="absolute left-[20px] top-[1px] h-[9px] w-[9px] rounded-full border-2 border-black bg-white" />
          <span className="absolute left-[33px] top-[-4px] leading-[16px] tracking-[-0.4px]">0.2</span>
        </div>
      </Slider>
      <Slider name="Domain end" box="left-[66px] top-[249px] w-[228px]" nameW="w-[86px]">
        <div className="relative ml-[10px] h-[10px] w-[120px]">
          <Ticks from={30} to={66} />
          <span className="absolute left-[33px] top-[-4px] leading-[16px] tracking-[-0.4px]">0.5</span>
          <span className="absolute left-[55px] top-[1px] h-[9px] w-[9px] rounded-full border-2 border-black bg-white" />
        </div>
      </Slider>
    </div>
  );
}

function Grasshopper() {
  return (
    <div className="z-10 flex w-[595px] shrink-0 flex-col overflow-hidden whitespace-nowrap border-l border-[#777] bg-[#f0f0f0] text-[12px] shadow-[-1px_0_10px_rgba(0,0,0,0.5)]">
      <div className="flex h-[29px] shrink-0 items-center bg-white pl-[7px] text-black">
        <span className="tracking-[-0.4px]">Grasshopper - Image Sampler*</span>
      </div>
      <div className="flex h-[27px] shrink-0 items-center pl-[12px] tracking-[-0.1px] text-black">
        {ghMenu.map((m) => (
          <span key={m.t} className={`${m.c} shrink-0`}>{m.t}</span>
        ))}
      </div>
      <div className="flex h-[23px] shrink-0 font-['Liberation_Sans',Arial,sans-serif] tracking-[-0.3px]">
        <div className="w-[55px] shrink-0 rounded-t-[5px] border-t border-r border-[#999] bg-linear-to-b from-white to-[#e8e8e8] pl-[7px] leading-[18px] text-black">Params</div>
        <div className="flex flex-1 border-b border-[#999] pl-[8px] leading-[24px] text-[#666]">
          {ghTabs.map((m) => (
            <span key={m.t} className={`${m.c} shrink-0`}>{m.t}</span>
          ))}
        </div>
      </div>
      <Ribbon />
      <CanvasBar />
      <Canvas />
    </div>
  );
}

export default function App() {
  return (
    <div className="flex h-[514px] w-[1023px] overflow-hidden bg-black font-['Open_Sans','Noto_Sans',sans-serif]">
      <svg className="absolute h-0 w-0">
        <defs>
          <linearGradient id="paper" x1="0" y1="0" x2="1" y2="1"><stop offset="0" stopColor="#fff" /><stop offset="1" stopColor="#dcdde2" /></linearGradient>
          <linearGradient id="blue" x1="0" y1="0" x2="1" y2="0"><stop offset="0" stopColor="#5f7ee0" /><stop offset=".5" stopColor="#c3d0ff" /><stop offset="1" stopColor="#5672d8" /></linearGradient>
          <radialGradient id="ball" cx=".4" cy=".35"><stop offset="0" stopColor="#c9d5ff" /><stop offset="1" stopColor="#4a68d4" /></radialGradient>
          <linearGradient id="fire" x1="0" y1="1" x2="1" y2="0"><stop offset="0" stopColor="#ffd21c" /><stop offset="1" stopColor="#f07b00" /></linearGradient>
          <linearGradient id="hex" x1="0" y1="0" x2="0" y2="1"><stop offset="0" stopColor="#3c3c3c" /><stop offset="1" stopColor="#0d0d0d" /></linearGradient>
          <linearGradient id="grey" x1="0" y1="0" x2="0" y2="1"><stop offset="0" stopColor="#d8d8d8" /><stop offset="1" stopColor="#8e8e8e" /></linearGradient>
          <linearGradient id="pink" x1="0" y1="0" x2="1" y2="0"><stop offset="0" stopColor="#ffb5da" /><stop offset="1" stopColor="#e0006a" /></linearGradient>
        </defs>
      </svg>
      <div className="flex w-[5px] shrink-0 flex-col bg-black">
        <div className="h-[10px] bg-[#15161f]" />
        <div className="h-[72px] bg-[#23253a]" />
        <div className="h-[5px] bg-[#111]" />
        <div className="h-[24px] w-[4px] rounded-r-full border-r-2 border-[#999] bg-[#2c2e3c]" />
      </div>
      <Rhino />
      <Grasshopper />
    </div>
  );
}
